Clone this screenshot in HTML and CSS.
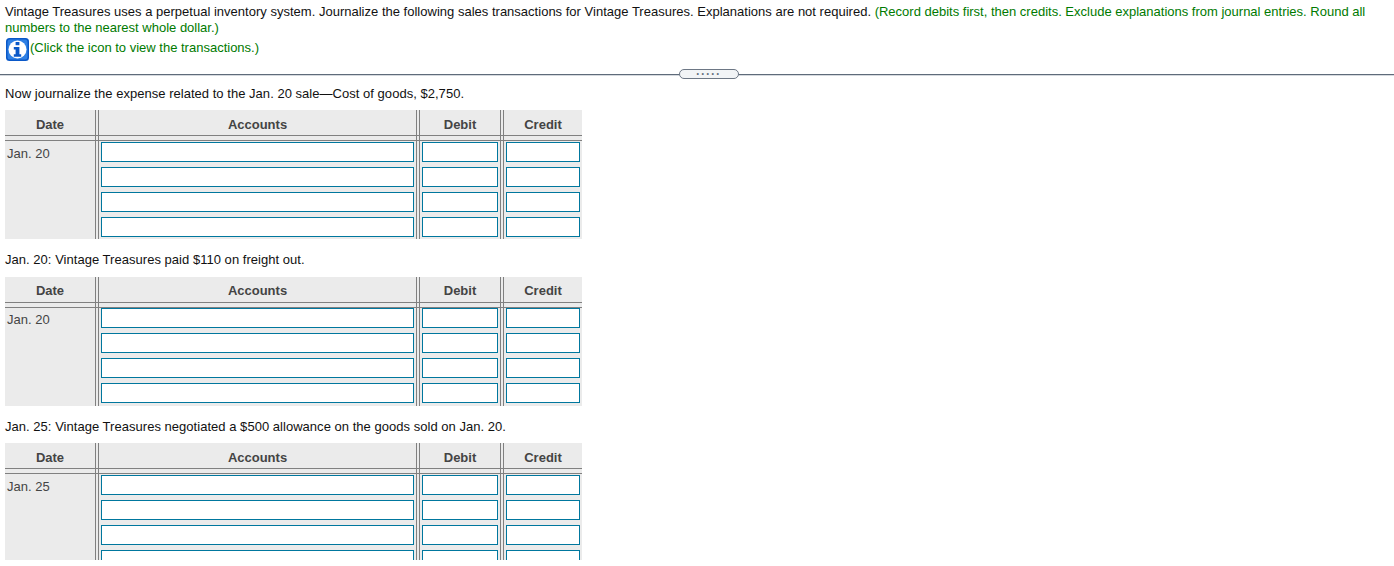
FILE: index.html
```html
<!DOCTYPE html>
<html lang="en">
<head>
<meta charset="utf-8">
<title>Vintage Treasures journal entries</title>
<link rel="stylesheet" href="styles.css">
</head>
<body>
<div class="page">
  <header class="question">
    <p class="line">Vintage Treasures uses a perpetual inventory system. Journalize the following sales transactions for Vintage Treasures. Explanations are not required. <span class="hint">(Record debits first, then credits. Exclude explanations from journal entries. Round all numbers to the nearest whole dollar.)</span></p>
    <div class="info">
      <svg class="info-icon" viewBox="0 0 23 23" width="23" height="23" aria-hidden="true">
        <rect x="0" y="0" width="23" height="23" rx="3.5" fill="#0a58c8"/>
        <rect x="1.5" y="1.5" width="20" height="20" rx="2.5" fill="#2f80e4"/>
        <circle cx="11.5" cy="11.5" r="9" fill="#fff"/>
        <rect x="9.6" y="4" width="3.8" height="3.2" fill="#0a58c8"/>
        <path d="M7.8 9h5.6v7.2h1.8v2.5H7.8v-2.5h1.8v-4.7H7.8z" fill="#0a58c8"/>
      </svg>
      <span class="hint">(Click the icon to view the transactions.)</span>
    </div>
  </header>
  <div class="divider">
    <div class="pill">•••••</div>
  </div>

  <section class="entry">
    <p class="line">Now journalize the expense related to the Jan. 20 sale—Cost of goods, $2,750.</p>
    <div class="journal">
      <div class="head">Date</div><div class="head">Accounts</div><div class="head">Debit</div><div class="head">Credit</div>
      <div class="date">Jan. 20</div>
      <div class="inputs"><i></i><i></i><i></i><i></i></div>
      <div class="inputs"><i></i><i></i><i></i><i></i></div>
      <div class="inputs"><i></i><i></i><i></i><i></i></div>
    </div>
  </section>

  <section class="entry">
    <p class="line">Jan. 20: Vintage Treasures paid $110 on freight out.</p>
    <div class="journal">
      <div class="head">Date</div><div class="head">Accounts</div><div class="head">Debit</div><div class="head">Credit</div>
      <div class="date">Jan. 20</div>
      <div class="inputs"><i></i><i></i><i></i><i></i></div>
      <div class="inputs"><i></i><i></i><i></i><i></i></div>
      <div class="inputs"><i></i><i></i><i></i><i></i></div>
    </div>
  </section>

  <section class="entry">
    <p class="line">Jan. 25: Vintage Treasures negotiated a $500 allowance on the goods sold on Jan. 20.</p>
    <div class="journal">
      <div class="head">Date</div><div class="head">Accounts</div><div class="head">Debit</div><div class="head">Credit</div>
      <div class="date">Jan. 25</div>
      <div class="inputs"><i></i><i></i><i></i><i></i></div>
      <div class="inputs"><i></i><i></i><i></i><i></i></div>
      <div class="inputs"><i></i><i></i><i></i><i></i></div>
    </div>
  </section>
</div>
</body>
</html>
```

FILE: styles.css
```css
* { box-sizing: border-box; }
html, body { margin: 0; padding: 0; background: #fff; overflow: hidden; }
body { font-family: "Liberation Sans", Arial, sans-serif; font-size: 13px; line-height: 16px; color: #111; }
.page { height: 560px; overflow: hidden; }
.question { padding: 4px 5px 0 5px; }
.line { margin: 0; letter-spacing: 0.01px; }
.entry .line { letter-spacing: 0.03px; }
.hint { color: #007a00; letter-spacing: 0; }
.info { display: flex; align-items: flex-start; height: 27px; margin-top: 2px; margin-left: 1px; }
.info-icon { display: block; flex: none; }
.info .hint { margin-top: 2px; margin-left: 1px; }
.divider { position: relative; height: 2px; margin-top: 9px; background: linear-gradient(#5f6b7a 50%, #d5d9de 50%); }
.pill { position: absolute; left: 679px; top: -5px; width: 60px; height: 10px; border: 1px solid #6d7785; border-radius: 5px; background: #f2f4f6; color: #5f6b7a; font-size: 7px; line-height: 8px; letter-spacing: 2.55px; text-align: center; }
.entry { padding-left: 5px; margin-top: 13px; }
.divider + .entry { margin-top: 10px; }
.entry > .line { margin-bottom: 8.5px; }
.divider + .entry > .line { margin-bottom: 8px; }
.journal { position: relative; display: grid; grid-template-columns: 91px 319px 82px 79px; grid-template-rows: 28px 101px; column-gap: 2px; width: 577px; background: #ebebeb; }
.journal::after { content: ""; position: absolute; left: 0; right: 0; top: 25px; height: 4px; border-top: 1px solid #808080; border-bottom: 1px solid #808080; }
.head { padding-top: 0.5px; font-weight: bold; color: #444; text-align: center; line-height: 28px; border-left: 1px solid #808080; border-right: 1px solid #808080; }
.date { color: #444; padding: 35.5px 0 0 2px; grid-row: 2; margin-top: -28px; border-right: 1px solid #808080; }
.head:first-child { border-left: 0; }
.head:nth-child(4) { border-right: 0; }
.inputs { display: flex; flex-direction: column; gap: 5px; padding: 3.6px 2px 0 2px; border-left: 1px solid #808080; border-right: 1px solid #808080; }
.inputs:last-child { border-right: 0; }
.inputs i { display: block; flex: none; height: 20px; background: #fff; border: 1px solid #00779e; }
```
